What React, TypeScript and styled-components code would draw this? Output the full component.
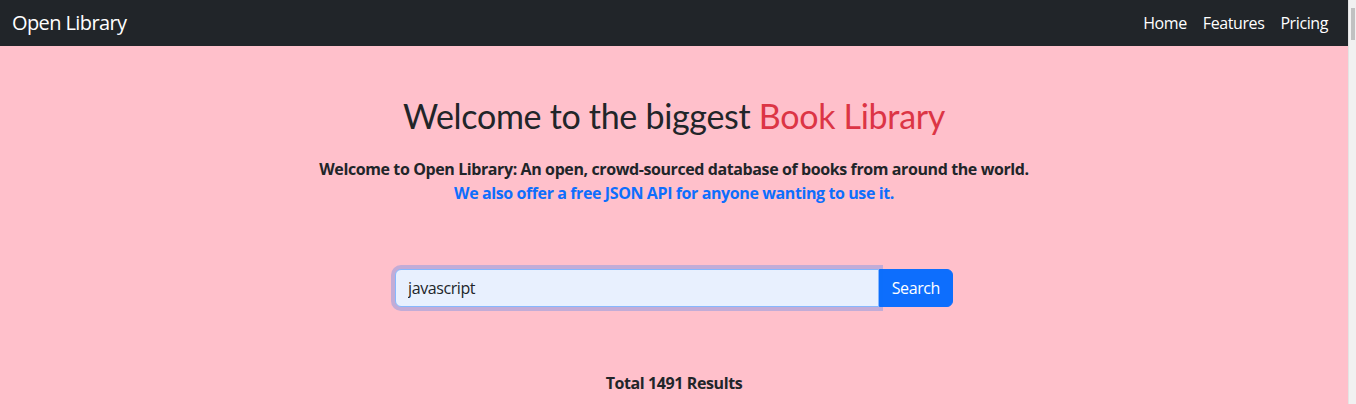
import React, { useEffect, useRef } from "react";
import styled, { createGlobalStyle } from "styled-components";

//styles start
const GlobalStyle = createGlobalStyle`
  html, body {
    margin: 0;
    padding: 0;
  }
  body {
    font-family: "Segoe UI", "Open Sans", "Noto Sans", sans-serif;
    font-size: 16px;
    line-height: 1.5;
    letter-spacing: -0.4px;
    color: #212529;
    background: pink;
    padding-right: 8px;
    overflow: hidden;
  }
`;

// windows style scrollbar drawn on the right edge
const ScrollTrack = styled.div`
  position: fixed;
  top: 0;
  right: 0;
  bottom: 0;
  width: 7px;
  background: #f1f1f1;
  border-left: 1px solid #e4e4e4;
`;

const ScrollThumb = styled.div`
  margin: 8px 1px 0 2px;
  height: 32px;
  background: #c1c1c1;
`;

const Nav = styled.nav`
  display: flex;
  align-items: center;
  justify-content: space-between;
  height: 46px;
  padding: 0 12px;
  background: #212529;
`;

const Brand = styled.a`
  color: #fff;
  font-size: 20px;
  letter-spacing: -0.6px;
  text-decoration: none;
`;

const NavLinks = styled.ul`
  display: flex;
  list-style: none;
  margin: 0;
  padding: 0;
`;

const NavLink = styled.a`
  display: block;
  padding: 0 8px;
  color: #fff;
  text-decoration: none;
`;

const Hero = styled.section`
  text-align: center;
  padding-top: 48px;
`;

const Title = styled.h1`
  margin: 0 0 19px;
  font-family: Lato, "Open Sans", sans-serif;
  font-size: 34px;
  font-weight: 400;
  letter-spacing: -0.3px;
  line-height: 44px;
`;

const Accent = styled.span`
  color: #dc3545;
`;

const Lead = styled.p`
  margin: 0;
  font-weight: 700;
`;

const Blue = styled.span`
  color: #0d6efd;
`;

const SearchGroup = styled.form`
  display: flex;
  width: 558px;
  margin: 64px auto 0;
`;

const Input = styled.input`
  flex: 1;
  height: 38px;
  box-sizing: border-box;
  padding: 6px 12px;
  font: inherit;
  letter-spacing: inherit;
  color: #212529;
  background: #e8f0fe;
  border: 1px solid #86b7fe;
  border-radius: 6px 0 0 6px;
  outline: none;
  box-shadow: 0 0 0 4px rgba(13, 110, 253, 0.25);
  position: relative;
  z-index: 1;
`;

const Button = styled.button`
  height: 38px;
  padding: 6px 12px;
  font: inherit;
  letter-spacing: inherit;
  color: #fff;
  background: #0d6efd;
  border: 1px solid #0d6efd;
  border-radius: 0 6px 6px 0;
`;

const Results = styled.div`
  margin-top: 64px;
  text-align: center;
`;

const Total = styled.h6`
  margin: 0;
  font-size: 16px;
  font-weight: 700;
  line-height: 1.5;
`;
//styles end

const App: React.FC = () => {
  const inputRef = useRef<HTMLInputElement>(null);

  useEffect(() => {
    const el = inputRef.current;
    if (el) {
      el.focus();
      el.setSelectionRange(el.value.length, el.value.length);
    }
  }, []);

  return (
    <>
      <GlobalStyle />
      <Nav>
        <Brand href="#">Open Library</Brand>
        <NavLinks>
          {["Home", "Features", "Pricing"].map((item) => (
            <li key={item}>
              <NavLink href="#">{item}</NavLink>
            </li>
          ))}
        </NavLinks>
      </Nav>
      <Hero>
        <Title>
          Welcome to the biggest <Accent>Book Library</Accent>
        </Title>
        <Lead>
          Welcome to Open Library: An open, crowd-sourced database of books from around the world.
          <br />
          <Blue>We also offer a free JSON API for anyone wanting to use it.</Blue>
        </Lead>
        <SearchGroup onSubmit={(e) => e.preventDefault()}>
          <Input ref={inputRef} type="text" defaultValue="javascript" />
          <Button type="submit">Search</Button>
        </SearchGroup>
        <Results>
          <Total>Total 1491 Results</Total>
        </Results>
      </Hero>
      <ScrollTrack>
        <ScrollThumb />
      </ScrollTrack>
    </>
  );
};

export default App;
